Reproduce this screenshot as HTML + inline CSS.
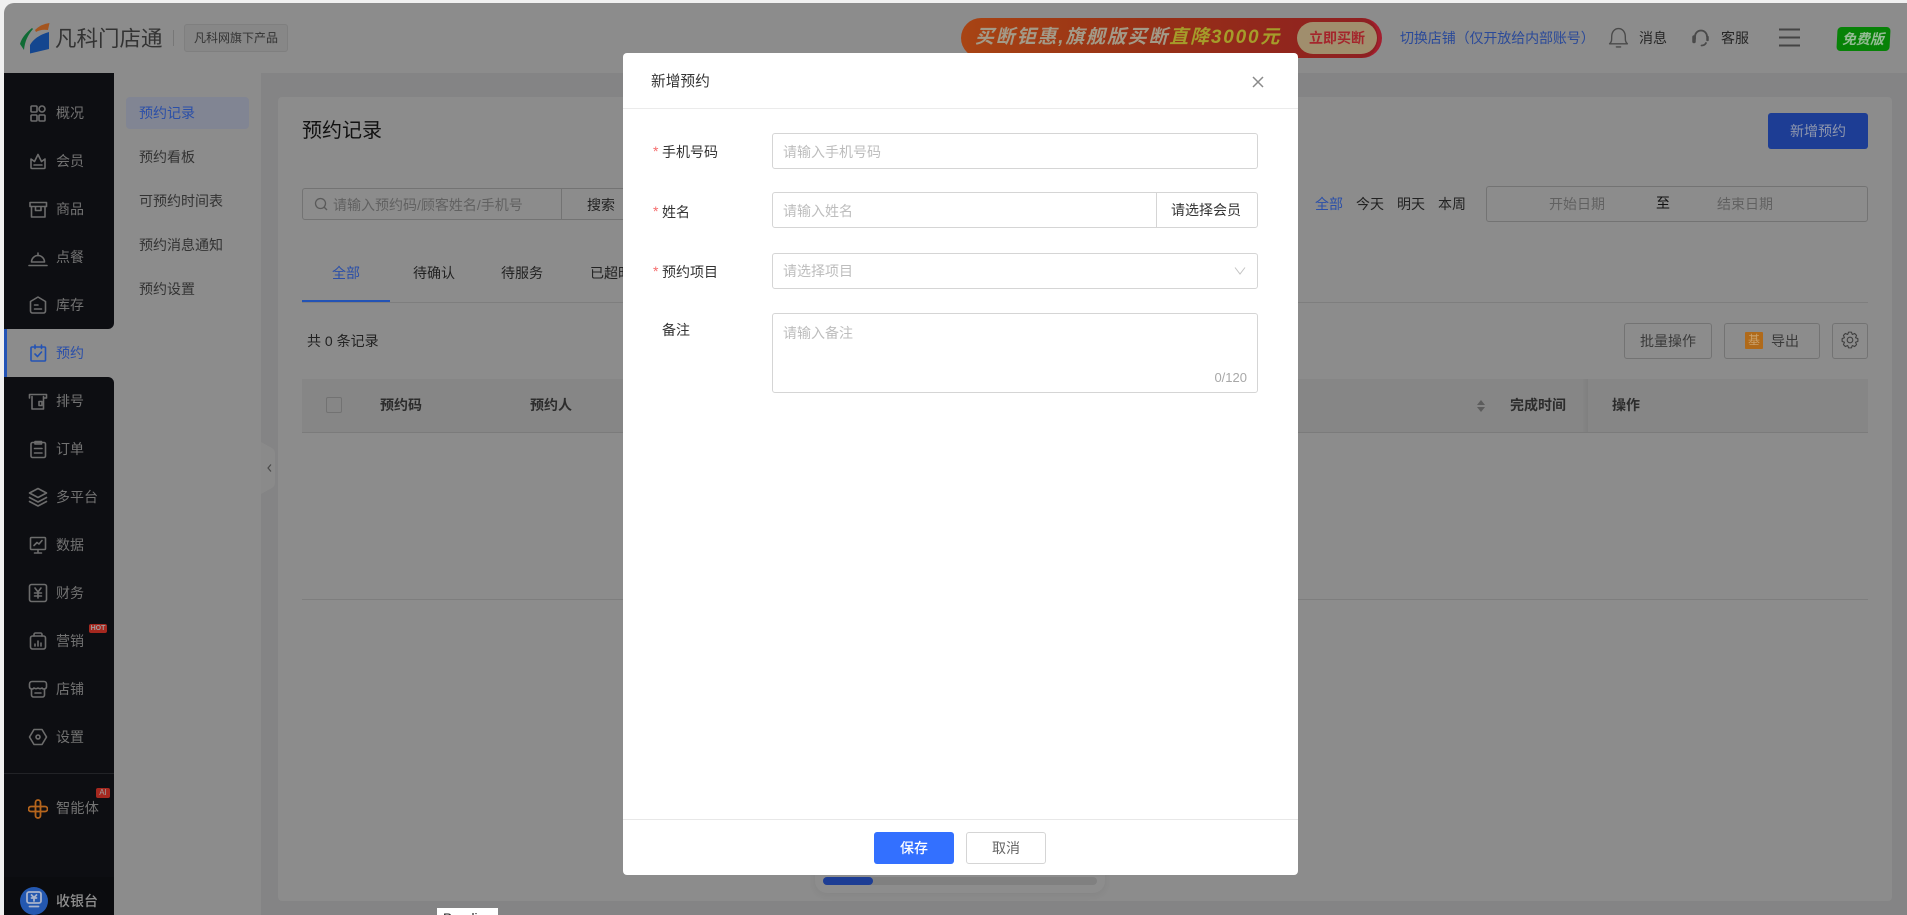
<!DOCTYPE html>
<html lang="zh-CN">
<head>
<meta charset="utf-8">
<title>预约记录</title>
<style>
html,body{margin:0;padding:0;width:1907px;height:915px;overflow:hidden;background:#f0f0f0}
*{box-sizing:border-box}
body{font-family:"Liberation Sans","Noto Sans CJK SC",sans-serif;font-size:14px;color:#2a2a2a;position:relative}
.a{position:absolute}
.t{position:absolute;line-height:20px;height:20px;white-space:nowrap}
.i{position:absolute;width:20px;height:20px;fill:none;stroke:#6c6c6c;stroke-width:1.6;stroke-linejoin:round;stroke-linecap:round}
.nav{color:#727272}
.sub{color:#333;left:139px}
.th{font-weight:700;color:#2c2c2c}
.box{position:absolute;border:1px solid #d5d5d5;border-radius:3px;background:#fff}
.ph{color:#bdbdbd}
.lab{color:#333;left:662px}
.star{color:#f56c6c;left:653px;font-size:14px}
.btn{position:absolute;border:1px solid #737373;border-radius:3px}
</style>
</head>
<body>
<div class="a" id="app" style="left:4px;top:3px;width:1903px;height:912px;background:#8c8c8c;border-top-left-radius:10px;overflow:hidden"></div>

<!-- logo -->
<svg class="a" style="left:0;top:0;width:300px;height:73px">
  <path d="M32 28 Q22 36 20 44 L24 50 Q25 38 33 29Z" fill="#0f6b35"/>
  <path d="M35 30 Q41 24 49.5 23 L48 30 Q41 29 36 32Z" fill="#a4551f"/>
  <path d="M49 32 L49 49 L30 53.5 L30 45 Q35 36 49 32Z" fill="#14468f"/>
</svg>
<div class="t" style="left:55px;top:27px;height:24px;line-height:24px;font-size:21.5px;color:#333">凡科门店通</div>
<div class="a" style="left:173px;top:30px;width:1px;height:16px;background:#777"></div>
<div class="a" style="left:184px;top:24px;width:104px;height:28px;background:#878787;border:1px solid #7f7f7f;border-radius:3px"></div>
<div class="t" style="left:194px;top:28px;font-size:12px;color:#333">凡科网旗下产品</div>

<!-- banner -->
<div class="a" style="left:961px;top:18px;width:421px;height:40px;border-radius:20px;background:linear-gradient(90deg,#a84414 0%,#963016 45%,#8e1f22 100%);border:solid #a31e2e;border-width:0 4px 0 0"></div>
<div class="t" style="left:975px;top:26px;height:24px;line-height:24px;font-size:19px;font-weight:700;font-style:italic;color:#a39a88;letter-spacing:1.8px;width:322px;overflow:hidden">买断钜惠,旗舰版买断<span style="color:#a59c2a">直降3000元</span></div>
<div class="a" style="left:1297px;top:22px;width:80px;height:32px;border-radius:16px;background:#a08e6d"></div>
<div class="t" style="left:1309px;top:28px;font-weight:700;color:#a4262c;font-size:14px">立即买断</div>

<!-- header right -->
<div class="t" style="left:1400px;top:28px;color:#2b4a99;font-size:14px;letter-spacing:-.1px">切换店铺（仅开放给内部账号）</div>
<svg class="i" style="left:1608px;top:27px;width:21px;height:22px;stroke:#4a4a4a;stroke-width:1.3" viewBox="0 0 20 20"><path d="M1.5 15.5c2-1.500 2-3.500 2-6.500 0-4.500 2.500-8 6.500-8s6.500 3.500 6.500 8c0 3 0 5 2 6.500z"/><path d="M8 18.500h4"/></svg>
<div class="t" style="left:1639px;top:28px;color:#262626;font-size:14px">消息</div>
<svg class="i" style="left:1691px;top:28px;stroke:#4a4a4a;stroke-width:1.8" viewBox="0 0 20 20"><path d="M4 11V8.500a6 6 0 0 1 12 0"/><path d="M3 9v4.500" stroke-width="3.5"/><path d="M16.500 9v3" stroke-width="2.5"/><path d="M15 15c-1 2-2.500 2.500-4.500 2.500"/></svg>
<div class="t" style="left:1721px;top:28px;color:#262626;font-size:14px">客服</div>
<svg class="a" style="left:1779px;top:27px;width:22px;height:22px"><path d="M0 2.500h21M0 10.500h21M0 18.500h21" stroke="#444" stroke-width="2"/></svg>
<div class="a" style="left:1837px;top:27px;width:53px;height:24px;background:#078207;border-radius:4px;transform:skewX(-3deg)"></div>
<div class="t" style="left:1842px;top:29px;font-weight:700;font-style:italic;font-size:14px;color:#94bc94">免费版</div>

<!-- left nav -->
<div class="a" style="left:4px;top:73px;width:110px;height:256px;background:#0d0e12;border-bottom-right-radius:6px"></div>
<div class="a" style="left:4px;top:377px;width:110px;height:538px;background:#0d0e12;border-top-right-radius:6px"></div>
<div class="a" style="left:4px;top:877px;width:110px;height:38px;background:#0b0c0f"></div>
<div class="a" style="left:4px;top:329px;width:3px;height:48px;background:#2353b5"></div>
<div class="a" style="left:4px;top:773px;width:110px;height:1px;background:#222327"></div>

<svg class="i" style="left:27.5px;top:103px" viewBox="0 0 20 20"><rect x="3" y="3" width="6" height="6" rx="1"/><circle cx="14" cy="6" r="3"/><rect x="3" y="12" width="6" height="6" rx="1"/><rect x="11" y="12" width="6" height="6" rx="1"/></svg>
<div class="t nav" style="left:56px;top:103px">概况</div>
<svg class="i" style="left:27.5px;top:151px" viewBox="0 0 20 20"><path d="M3 8l3.500 2.500L10 3.500l3.500 7L17 8v8.500a1 1 0 0 1-1 1H4a1 1 0 0 1-1-1z"/><path d="M6 14h8"/></svg>
<div class="t nav" style="left:56px;top:151px">会员</div>
<svg class="i" style="left:27.5px;top:199px" viewBox="0 0 20 20"><path d="M2 3.500h16.500V7.500H2z"/><path d="M3.500 7.500V18h13.500V7.500"/><path d="M7.500 8v3.500h5.500V8"/></svg>
<div class="t nav" style="left:56px;top:199px">商品</div>
<svg class="i" style="left:27.5px;top:247px" viewBox="0 0 20 20"><path d="M3.500 15a6.500 6.500 0 0 1 13 0z"/><path d="M10 8.500V6"/><path d="M1 18.500h18"/></svg>
<div class="t nav" style="left:56px;top:247px">点餐</div>
<svg class="i" style="left:27.5px;top:295px" viewBox="0 0 20 20"><path d="M2.500 6.500L10 2l7.500 4.500V16a2 2 0 0 1-2 2h-11a2 2 0 0 1-2-2z"/><path d="M6.500 10h3.500M6.500 14h7"/></svg>
<div class="t nav" style="left:56px;top:295px">库存</div>

<svg class="i" style="left:27.5px;top:343px;stroke:#2353b5" viewBox="0 0 20 20"><rect x="3" y="4" width="14.500" height="14" rx="1"/><path d="M7 2v3.500M13.500 2v3.500"/><path d="M7 11l2.500 2.500 4-4.500"/></svg>
<div class="t" style="left:56px;top:343px;color:#2b4fa8">预约</div>

<svg class="i" style="left:27.5px;top:391px" viewBox="0 0 20 20"><path d="M1.500 7V3.500h17V7h-2"/><path d="M4 5.500V18h11.500V5.500"/><path d="M11 10.500h3v4h-3z"/></svg>
<div class="t nav" style="left:56px;top:391px">排号</div>
<svg class="i" style="left:27.5px;top:439px" viewBox="0 0 20 20"><rect x="3" y="3.500" width="14.500" height="15" rx="1.500"/><path d="M7 2.500h6.500V5H7z"/><path d="M6.500 9.500h7.500M6.500 14h7.500"/></svg>
<div class="t nav" style="left:56px;top:439px">订单</div>
<svg class="i" style="left:27.5px;top:487px" viewBox="0 0 20 20"><path d="M10 1.500L18.500 6 10 10.500 1.500 6z"/><path d="M1.500 10.500l8.500 4.500 8.500-4.500"/><path d="M1.500 14.500l8.500 4.500 8.500-4.500"/></svg>
<div class="t nav" style="left:56px;top:487px">多平台</div>
<svg class="i" style="left:27.5px;top:535px" viewBox="0 0 20 20"><rect x="2.500" y="2.500" width="15" height="12" rx="1"/><path d="M6 10.500l3-3 2 1.500 3-3.500"/><path d="M10 14.500V18M6.500 18h7"/></svg>
<div class="t nav" style="left:56px;top:535px">数据</div>
<svg class="i" style="left:27.5px;top:583px" viewBox="0 0 20 20"><rect x="1.500" y="1.500" width="17" height="17" rx="2"/><path d="M7 5l3 4 3-4M6.500 10h7M6.500 13h7M10 9v6"/></svg>
<div class="t nav" style="left:56px;top:583px">财务</div>
<svg class="i" style="left:27.5px;top:631px" viewBox="0 0 20 20"><rect x="2.500" y="5" width="15" height="13" rx="2"/><path d="M6 5V3.500a1.500 1.500 0 0 1 1.500-1.500h5A1.500 1.500 0 0 1 14 3.500V5"/><path d="M7 15v-2M10 15v-5M13 15v-3"/></svg>
<div class="t nav" style="left:56px;top:631px">营销</div>
<div class="a" style="left:89px;top:624px;width:18px;height:9px;background:#a5281f;border-radius:2px;color:#9c9c9c;font-size:7px;line-height:9px;text-align:center;font-weight:700">HOT</div>
<svg class="i" style="left:27.5px;top:679px" viewBox="0 0 20 20"><path d="M4 2.500h12a2.500 2.500 0 0 1 2.500 2.500v3a2.500 2.500 0 0 1-4.500 1 3.500 3.500 0 0 1-4 0 3.500 3.500 0 0 1-4 0 2.500 2.500 0 0 1-4.500-1V5A2.500 2.500 0 0 1 4 2.500z"/><path d="M3.500 10v6a2 2 0 0 0 2 2h9a2 2 0 0 0 2-2v-6"/><path d="M7 14h6"/></svg>
<div class="t nav" style="left:56px;top:679px">店铺</div>
<svg class="i" style="left:27.5px;top:727px" viewBox="0 0 20 20"><path d="M6 2.500h8l4.500 7.500-4.500 7.500H6L1.500 10z"/><circle cx="10" cy="10" r="2"/></svg>
<div class="t nav" style="left:56px;top:727px">设置</div>
<svg class="i" style="left:28px;top:799px;stroke:#b5651d;stroke-width:1.8" viewBox="0 0 20 20"><path d="M7.500 12.500V3.500a2.500 2.500 0 0 1 5 0V9"/><path d="M7.500 7.500H3a2.500 2.500 0 0 0 0 5h9"/><path d="M12.500 7.500V16.500a2.500 2.500 0 0 1-5 0V11"/><path d="M8 7.500h9a2.500 2.500 0 0 1 0 5h-4.500"/></svg>
<div class="t nav" style="left:56px;top:799px;font-size:14.3px">智能体</div>
<div class="a" style="left:96px;top:788px;width:14px;height:10px;background:#a5281f;border-radius:2px;color:#a0a0a0;font-size:8px;line-height:10px;text-align:center">AI</div>

<div class="a" style="left:20px;top:887px;width:28px;height:28px;border-radius:50%;background:#2458b0"></div>
<svg class="i" style="left:24px;top:890px;stroke:#a8b4cc;stroke-width:1.8" viewBox="0 0 20 20"><rect x="3" y="2" width="14" height="11" rx="2"/><path d="M7.500 5l2.500 2.500L12.500 5M7.500 8h5M10 7v4"/><path d="M5.500 16.500h9"/></svg>
<div class="t" style="left:56px;top:891px;color:#8f8f8f;font-weight:500">收银台</div>

<!-- sub nav -->
<div class="a" style="left:126px;top:97px;width:123px;height:32px;background:#818593;border-radius:4px"></div>
<div class="t" style="left:139px;top:103px;color:#2b4fa8">预约记录</div>
<div class="t sub" style="top:147px">预约看板</div>
<div class="t sub" style="top:191px">可预约时间表</div>
<div class="t sub" style="top:235px">预约消息通知</div>
<div class="t sub" style="top:279px">预约设置</div>

<!-- content bg -->
<div class="a" style="left:261px;top:73px;width:1646px;height:842px;background:#848485"></div>
<svg class="a" style="left:261px;top:442px;width:14px;height:52px"><path d="M0 0L11 6Q14 8 14 11V41Q14 44 11 46L0 52Z" fill="#8a8a8a"/><path d="M10 22.500l-3 3.500 3 3.500" fill="none" stroke="#4a4a4a" stroke-width="1.200"/></svg>

<!-- card -->
<div class="a" style="left:278px;top:97px;width:1614px;height:804px;background:#8c8c8c;border-radius:4px"></div>
<div class="t" style="left:302px;top:118px;height:26px;line-height:26px;font-size:20px;color:#111">预约记录</div>
<div class="a" style="left:1768px;top:113px;width:100px;height:36px;background:#1d3d94;border-radius:3px"></div>
<div class="t" style="left:1790px;top:121px;color:#8f97ad">新增预约</div>

<!-- search -->
<div class="btn" style="left:302px;top:188px;width:340px;height:32px"></div>
<div class="a" style="left:561px;top:188px;width:1px;height:32px;background:#737373"></div>
<svg class="a" style="left:314px;top:197px;width:14px;height:14px"><circle cx="6.500" cy="6.500" r="5" fill="none" stroke="#5a5a5a" stroke-width="1.300"/><path d="M10 10l3 3" stroke="#5a5a5a" stroke-width="1.300"/></svg>
<div class="t" style="left:333px;top:195px;color:#616161">请输入预约码/顾客姓名/手机号</div>
<div class="t" style="left:587px;top:195px;color:#222">搜索</div>

<!-- tabs -->
<div class="t" style="left:332px;top:263px;color:#2b4fa8">全部</div>
<div class="t" style="left:413px;top:263px;color:#222">待确认</div>
<div class="t" style="left:501px;top:263px;color:#222">待服务</div>
<div class="t" style="left:590px;top:263px;color:#222">已超时</div>
<div class="a" style="left:302px;top:302px;width:1566px;height:1px;background:#7e7e7e"></div>
<div class="a" style="left:302px;top:300px;width:88px;height:2px;background:#2353b5"></div>

<!-- date filter -->
<div class="t" style="left:1315px;top:194px;color:#2b4fa8">全部</div>
<div class="t" style="left:1356px;top:194px;color:#222">今天</div>
<div class="t" style="left:1397px;top:194px;color:#222">明天</div>
<div class="t" style="left:1438px;top:194px;color:#222">本周</div>
<div class="btn" style="left:1486px;top:186px;width:382px;height:36px"></div>
<div class="t" style="left:1549px;top:194px;color:#616161">开始日期</div>
<div class="t" style="left:1656px;top:193px;color:#111">至</div>
<div class="t" style="left:1717px;top:194px;color:#616161">结束日期</div>

<!-- toolbar -->
<div class="t" style="left:307px;top:331px;color:#222">共 0 条记录</div>
<div class="btn" style="left:1624px;top:323px;width:88px;height:36px"></div>
<div class="t" style="left:1640px;top:331px;color:#3a3a3a">批量操作</div>
<div class="btn" style="left:1724px;top:323px;width:96px;height:36px"></div>
<div class="a" style="left:1745px;top:332px;width:18px;height:17px;background:#b06a1a;border-radius:1px;color:#c9a06a;font-size:12px;line-height:17px;text-align:center">基</div>
<div class="t" style="left:1771px;top:331px;color:#3a3a3a">导出</div>
<div class="btn" style="left:1832px;top:323px;width:36px;height:36px"></div>
<svg class="i" style="left:1840px;top:330px;stroke:#3f3f3f;stroke-width:1.1" viewBox="0 0 20 20"><path d="M8.610 2.120H11.390L12.300 4.460 14.590 3.450 16.550 5.410 15.540 7.700 17.880 8.610V11.390L15.540 12.300 16.550 14.590 14.590 16.550 12.300 15.540 11.390 17.880H8.610L7.700 15.540 5.410 16.550 3.450 14.590 4.460 12.300 2.120 11.390V8.610L4.460 7.700 3.450 5.410 5.410 3.450 7.700 4.460Z"/><circle cx="10" cy="10" r="2.800"/></svg>

<!-- table head -->
<div class="a" style="left:302px;top:379px;width:1566px;height:54px;background:#868686;border-bottom:1px solid #7b7b7b"></div>
<div class="a" style="left:1582px;top:379px;width:6px;height:53px;background:linear-gradient(90deg,rgba(0,0,0,0),rgba(0,0,0,.05))"></div>
<div class="a" style="left:326px;top:397px;width:16px;height:16px;border:1px solid #727272;border-radius:2px"></div>
<div class="t th" style="left:380px;top:395px">预约码</div>
<div class="t th" style="left:530px;top:395px">预约人</div>
<svg class="a" style="left:1476px;top:399px;width:10px;height:14px"><path d="M5 1L9 6H1zM5 13L9 8H1z" fill="#5c5c5c"/></svg>
<div class="t th" style="left:1510px;top:395px">完成时间</div>
<div class="t th" style="left:1612px;top:395px">操作</div>
<div class="a" style="left:302px;top:599px;width:1566px;height:1px;background:#7e7e7e"></div>

<!-- scroll bar -->
<div class="a" style="left:815px;top:860px;width:290px;height:33px;background:#8d8d8d;border-radius:12px;box-shadow:0 2px 8px rgba(0,0,0,.06)"></div>
<div class="a" style="left:823px;top:877px;width:274px;height:8px;background:#808080;border-radius:4px"></div>
<div class="a" style="left:823px;top:877px;width:50px;height:8px;background:#1d3d94;border-radius:4px"></div>

<!-- tooltip -->
<div class="a" style="left:437px;top:908px;width:61px;height:7px;background:#fff;overflow:hidden"><span style="position:absolute;left:6px;top:3px;font-size:13.5px;line-height:16px;color:#222">Pending</span></div>

<!-- modal -->
<div class="a" style="left:623px;top:53px;width:675px;height:822px;background:#fff;border-radius:4px"></div>
<div class="t" style="left:651px;top:72px;font-size:14.7px;color:#333">新增预约</div>
<svg class="a" style="left:1252px;top:76px;width:12px;height:12px"><path d="M1 1l10 10M11 1L1 11" stroke="#8a8a8a" stroke-width="1.500"/></svg>
<div class="a" style="left:623px;top:108px;width:675px;height:1px;background:#ebebeb"></div>

<div class="t star" style="top:141px">*</div>
<div class="t lab" style="top:142px">手机号码</div>
<div class="box" style="left:772px;top:133px;width:486px;height:36px"></div>
<div class="t ph" style="left:783px;top:142px">请输入手机号码</div>

<div class="t star" style="top:201px">*</div>
<div class="t lab" style="top:202px">姓名</div>
<div class="box" style="left:772px;top:192px;width:486px;height:36px"></div>
<div class="a" style="left:1156px;top:192px;width:1px;height:36px;background:#d5d5d5"></div>
<div class="t ph" style="left:783px;top:201px">请输入姓名</div>
<div class="t" style="left:1171px;top:200px;color:#333">请选择会员</div>

<div class="t star" style="top:261px">*</div>
<div class="t lab" style="top:262px">预约项目</div>
<div class="box" style="left:772px;top:253px;width:486px;height:36px"></div>
<div class="t ph" style="left:783px;top:261px">请选择项目</div>
<svg class="a" style="left:1234px;top:266px;width:12px;height:10px"><path d="M1 1.500l5 6.500 5-6.500" fill="none" stroke="#c4c4c4" stroke-width="1"/></svg>

<div class="t lab" style="top:320px">备注</div>
<div class="box" style="left:772px;top:313px;width:486px;height:80px"></div>
<div class="t ph" style="left:783px;top:323px">请输入备注</div>
<div class="t" style="left:1207px;top:368px;width:40px;text-align:right;font-size:13px;color:#a8a8a8">0/120</div>

<div class="a" style="left:623px;top:819px;width:675px;height:1px;background:#e8e8e8"></div>
<div class="a" style="left:874px;top:832px;width:80px;height:32px;background:#3370ff;border-radius:3px;color:#fff;text-align:center;line-height:32px;font-weight:500">保存</div>
<div class="a" style="left:966px;top:832px;width:80px;height:32px;background:#fff;border:1px solid #d5d5d5;border-radius:3px;color:#666;text-align:center;line-height:30px">取消</div>
</body>
</html>
